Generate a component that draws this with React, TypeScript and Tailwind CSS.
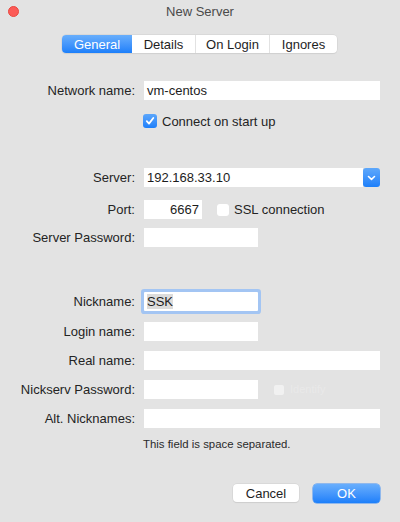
import React from "react";

const tabs = [
  { label: "General", w: "w-[70px]", active: true },
  { label: "Details", w: "w-[63px]", active: false },
  { label: "On Login", w: "w-[74px]", active: false },
  { label: "Ignores", w: "w-[68px]", active: false },
];

function Label({ children }: { children: React.ReactNode }) {
  return <div className="w-[136px] shrink-0 text-right pr-[1px] text-[13px] leading-none text-[#242424]">{children}</div>;
}

function Field({ w, value, align = "left" }: { w: string; value?: string; align?: "left" | "right" }) {
  return (
    <div
      className={`${w} h-[19px] bg-white flex items-center text-[13px] text-[#1c1c1c] px-[3px] ${
        align === "right" ? "justify-end" : ""
      }`}
    >
      {value}
    </div>
  );
}

export default function App() {
  return (
    <div className="w-[400px] h-[522px] bg-[#e3e3e3] font-['Liberation_Sans',Arial,sans-serif] flex flex-col overflow-hidden select-none">
      {/* title bar */}
      <div className="h-[22px] flex items-center shrink-0">
        <div className="w-[60px] pl-[8px] flex items-center">
          <div className="w-[11px] h-[11px] rounded-full bg-[#fc5b57] border border-[#e9473f]" />
        </div>
        <div className="flex-1 text-center text-[13px] text-[#4a4a4a] leading-none">New Server</div>
        <div className="w-[60px]" />
      </div>

      {/* tabs */}
      <div className="mt-[13px] flex justify-center">
        <div className="flex h-[18px] rounded-[4px] bg-white shadow-[0_0_0_0.5px_#d0d0d0,0_1px_1px_rgba(0,0,0,0.08)] ml-[-1px]">
          {tabs.map((t, i) => (
            <div
              key={t.label}
              className={`${t.w} flex items-center justify-center text-[13px] leading-none ${
                t.active
                  ? "bg-gradient-to-b from-[#68aefc] to-[#1b7ffa] text-white rounded-l-[4px]"
                  : "text-[#1e1e1e]"
              } ${i > 1 ? "border-l border-[#e2e2e2]" : ""} ${i === tabs.length - 1 ? "rounded-r-[4px]" : ""}`}
            >
              {t.label}
            </div>
          ))}
        </div>
      </div>

      {/* general section */}
      <div className="mt-[28px] flex items-center gap-[8px]">
        <Label>Network name:</Label>
        <Field w="w-[236px]" value="vm-centos" />
      </div>

      <div className="mt-[14px] pl-[143px] flex items-center gap-[5px]">
        <div className="w-[14px] h-[14px] rounded-[3px] bg-gradient-to-b from-[#5ba6fb] to-[#1c7ffa] flex items-center justify-center">
          <svg width="10" height="10" viewBox="0 0 10 10" fill="none">
            <path d="M1.8 5.2 L4 7.6 L8.3 2" stroke="white" strokeWidth="1.8" strokeLinecap="round" strokeLinejoin="round" />
          </svg>
        </div>
        <span className="text-[13px] leading-none text-[#242424]">Connect on start up</span>
      </div>

      <div className="mt-[40px] flex items-center gap-[8px]">
        <Label>Server:</Label>
        <div className="flex items-center">
          <Field w="w-[219px]" value="192.168.33.10" />
          <div className="w-[17px] h-[19px] rounded-[3px] bg-gradient-to-b from-[#5ea8fb] to-[#1b7ffa] flex items-center justify-center">
            <svg width="9" height="6" viewBox="0 0 9 6" fill="none">
              <path d="M1.5 1.5 L4.5 4.3 L7.5 1.5" stroke="white" strokeWidth="1.6" strokeLinecap="round" strokeLinejoin="round" />
            </svg>
          </div>
        </div>
      </div>

      <div className="mt-[13px] flex items-center gap-[8px]">
        <Label>Port:</Label>
        <Field w="w-[58px]" value="6667" align="right" />
        <div className="ml-[7px] w-[12px] h-[12px] rounded-[3px] bg-white" />
        <span className="ml-[-3px] text-[13px] leading-none text-[#242424]">SSL connection</span>
      </div>

      <div className="mt-[9px] flex items-center gap-[8px]">
        <Label>Server Password:</Label>
        <Field w="w-[114px]" />
      </div>

      {/* identity section */}
      <div className="mt-[45px] flex items-center gap-[8px]">
        <Label>Nickname:</Label>
        <div className="w-[114px] h-[19px] bg-white flex items-center text-[13px] text-[#1c1c1c] px-[3px] rounded-[1px] shadow-[0_0_0_3px_#a3c5f3]">
          <span className="bg-[#dcdcdc] leading-[15px]">SSK</span>
        </div>
      </div>

      <div className="mt-[11px] flex items-center gap-[8px]">
        <Label>Login name:</Label>
        <Field w="w-[114px]" />
      </div>

      <div className="mt-[10px] flex items-center gap-[8px]">
        <Label>Real name:</Label>
        <Field w="w-[236px]" />
      </div>

      <div className="mt-[10px] flex items-center gap-[8px]">
        <Label>Nickserv Password:</Label>
        <Field w="w-[114px]" />
        <div className="ml-[8px] w-[10px] h-[10px] rounded-[2px] bg-[#f1f1f1]" />
        <span className="ml-[-2px] text-[11px] leading-none text-[#e9e9e9]">Identify</span>
      </div>

      <div className="mt-[10px] flex items-center gap-[8px]">
        <Label>Alt. Nicknames:</Label>
        <Field w="w-[236px]" />
      </div>

      <div className="mt-[10px] pl-[143px] text-[11.4px] leading-[13px] text-[#2a2a2a]">
        This field is space separated.
      </div>

      {/* buttons */}
      <div className="mt-[33px] flex justify-end gap-[14px] pr-[20px]">
        <button className="w-[66px] h-[18px] rounded-[4px] bg-white text-[13px] leading-none text-[#1e1e1e] shadow-[0_0_0_0.5px_#cfcfcf,0_1px_1px_rgba(0,0,0,0.1)]">
          Cancel
        </button>
        <button className="w-[67px] h-[19px] rounded-[4px] bg-gradient-to-b from-[#68aefc] to-[#1b7ffa] text-[13px] leading-none text-white shadow-[0_0_0_0.5px_#3f8ef5]">
          OK
        </button>
      </div>
    </div>
  );
}
